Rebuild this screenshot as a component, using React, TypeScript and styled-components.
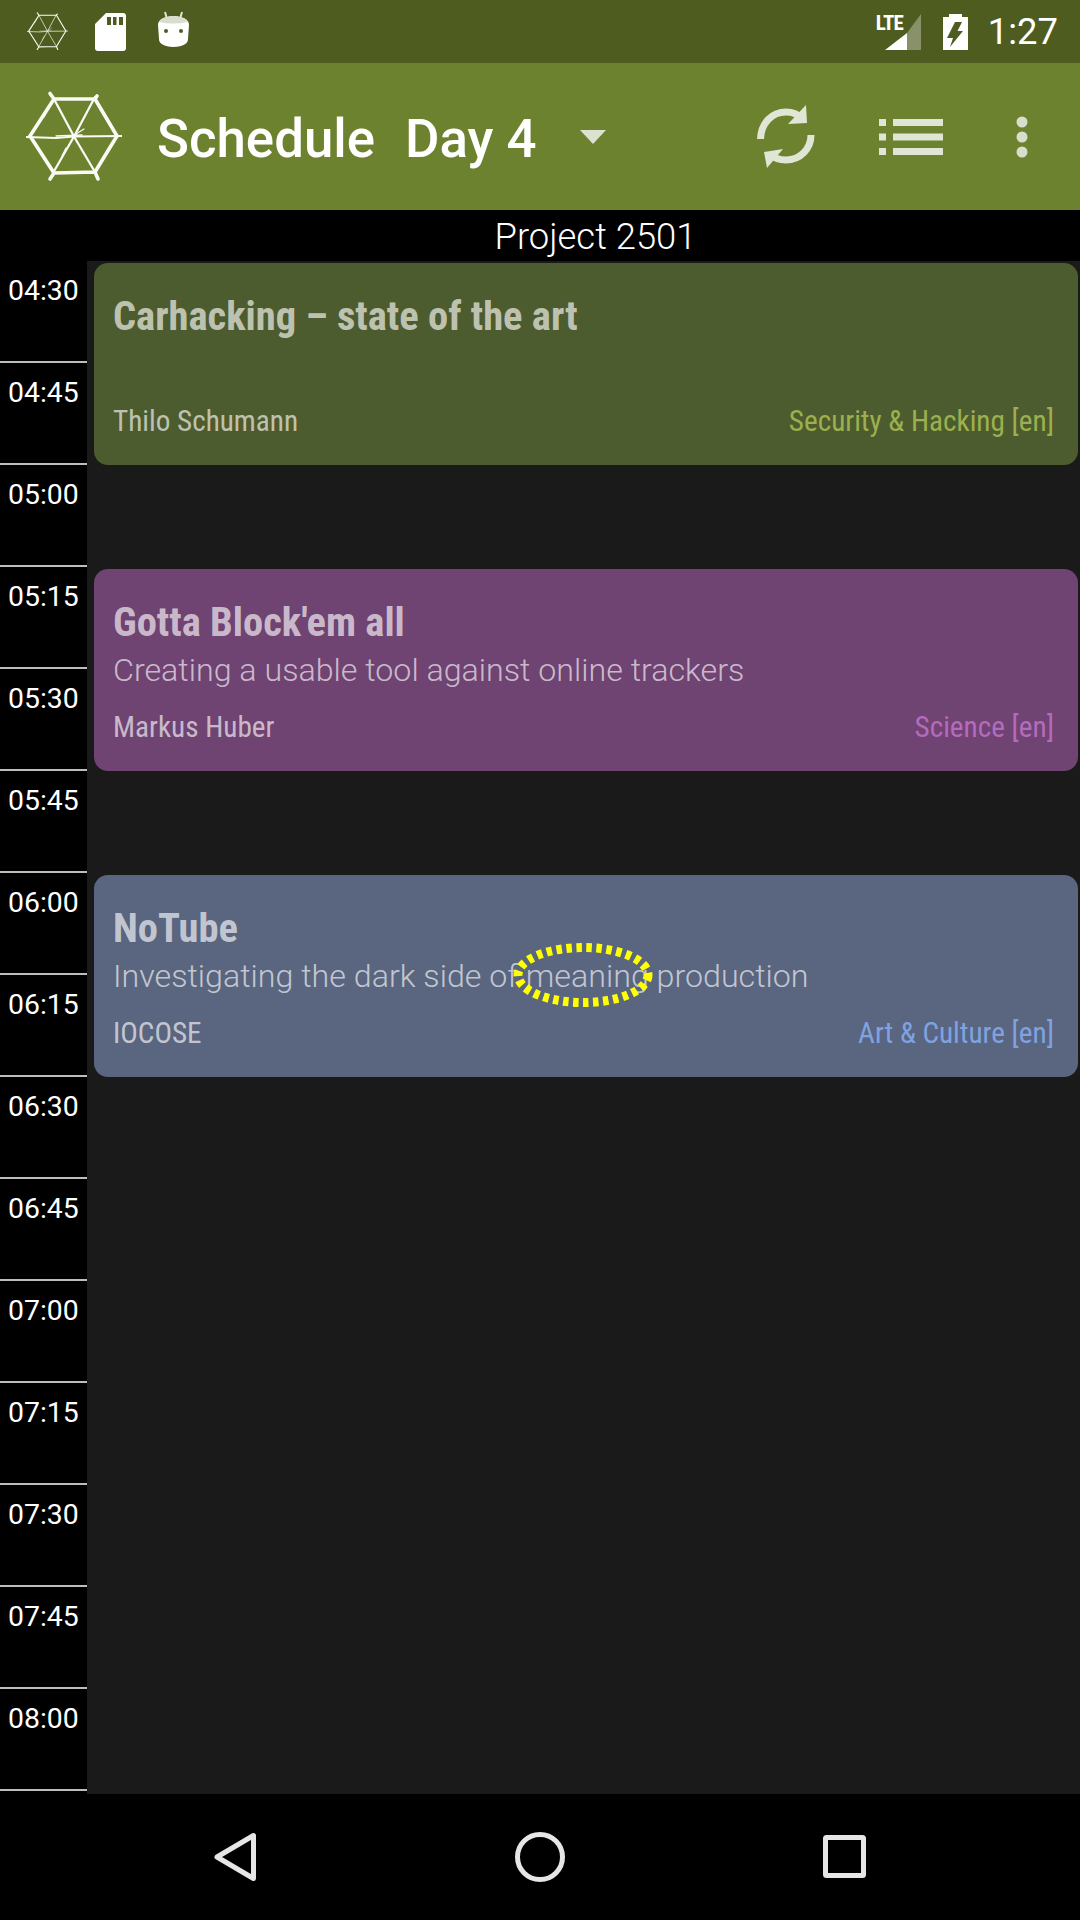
import React from 'react';
import styled, { createGlobalStyle } from 'styled-components';

const GlobalStyle = createGlobalStyle`
  html, body { margin: 0; padding: 0; background: #000; }
  #root { width: 1080px; height: 1920px; overflow: hidden; }
`;

/* ─── page frame ─── */
const Screen = styled.div`
  width: 1080px;
  height: 1920px;
  display: flex;
  flex-direction: column;
  background: #000;
  font-family: Roboto, sans-serif;
  color: #fff;
`;

/* ─── status bar ─── */
const StatusBar = styled.div`
  height: 63px;
  flex: none;
  background: #4f5c20;
  display: flex;
  align-items: center;
  padding: 0 22px 0 27px;
`;

const NoticeIcons = styled.div`
  display: flex;
  align-items: center;
  gap: 27px;
`;

const AndroidIcon = styled.svg`
  margin: -4px 0 0 5px;
`;

const SystemIcons = styled.div`
  margin-left: auto;
  display: flex;
  align-items: center;
`;

const SignalWrap = styled.div`
  position: relative;
  width: 36px;
  height: 36px;
`;

const Lte = styled.span`
  position: absolute;
  left: -9px;
  top: -2px;
  font-family: "Roboto Condensed", Roboto, sans-serif;
  font-size: 21px;
  line-height: 22px;
  font-weight: 700;
  letter-spacing: -0.8px;
`;

const BatteryIcon = styled.svg`
  margin-left: 22px;
`;

const Clock = styled.span`
  margin: 1px 0 0 20px;
  font-size: 36.4px;
  line-height: 42px;
`;

/* ─── action bar ─── */
const AppBar = styled.div`
  height: 147px;
  flex: none;
  background: #6d822e;
  display: flex;
  align-items: center;
  padding-left: 26px;
`;

const AppTitle = styled.span<{ $gap: number }>`
  margin: 4px 0 0 ${p => p.$gap}px;
  font-size: 52.8px;
  font-weight: 500;
  white-space: nowrap;
`;

const Caret = styled.svg`
  margin-left: 43px;
`;

const Actions = styled.div`
  margin-left: auto;
  display: flex;
  align-items: center;
  padding-right: 52px;
`;

const RefreshIcon = styled.svg`
  margin-right: 63px;
`;

const ListIcon = styled.svg`
  margin-right: 73px;
`;

/* ─── room title ─── */
const RoomTitle = styled.div`
  height: 50px;
  flex: none;
  padding: 1px 0 0 111px;
  text-align: center;
  font-size: 36.4px;
  font-weight: 300;
  line-height: 51px;
`;

/* ─── schedule body ─── */
const Body = styled.div`
  flex: 1;
  min-height: 0;
  display: flex;
`;

const TimeColumn = styled.div`
  width: 87px;
  flex: none;
  display: flex;
  flex-direction: column;
`;

const TimeCell = styled.div`
  height: 102px;
  box-sizing: border-box;
  flex: none;
  border-bottom: 2px solid #bdbdbd;
  padding: 13px 0 0 8px;
  font-size: 28.4px;
  line-height: 34px;
`;

const Grid = styled.div`
  flex: 1;
  background: #1a1a1a;
  display: flex;
  flex-direction: column;
  gap: 104px;
  padding: 2px 2px 0 7px;
`;

const Card = styled.div<{ $bg: string }>`
  position: relative;
  height: 202px;
  box-sizing: border-box;
  flex: none;
  background: ${p => p.$bg};
  border-radius: 14px;
  padding: 29px 24px 0 19px;
  display: flex;
  flex-direction: column;
  color: rgba(255, 255, 255, 0.65);
`;

const CardTitle = styled.div`
  font-family: "Roboto Condensed", Roboto, sans-serif;
  font-size: 40.5px;
  font-weight: 700;
  line-height: 48px;
  white-space: nowrap;
`;

const CardSubtitle = styled.div`
  font-size: 32.2px;
  font-weight: 300;
  line-height: 36px;
  margin-top: 6px;
  white-space: nowrap;
`;

const CardFooter = styled.div`
  margin-top: auto;
  padding-bottom: 27px;
  display: flex;
  justify-content: space-between;
  font-family: "Roboto Condensed", Roboto, sans-serif;
  font-size: 29.2px;
  line-height: 34px;
`;

const Track = styled.span<{ $color: string }>`
  color: ${p => p.$color};
`;

const TouchMark = styled.svg`
  position: absolute;
  left: 418.5px;
  top: 67px;
`;

/* ─── navigation bar ─── */
const NavBar = styled.div`
  height: 126px;
  flex: none;
  background: #000;
  display: flex;
  align-items: center;
  justify-content: space-between;
  padding: 0 213px 0 213px;
`;

const TIMES = [
  '04:30', '04:45', '05:00', '05:15', '05:30', '05:45', '06:00', '06:15',
  '06:30', '06:45', '07:00', '07:15', '07:30', '07:45', '08:00',
];

const EVENTS = [
  {
    title: 'Carhacking – state of the art',
    subtitle: '',
    speaker: 'Thilo Schumann',
    track: 'Security & Hacking [en]',
    bg: '#4d5c2e',
    trackColor: '#9db04f',
  },
  {
    title: "Gotta Block'em all",
    subtitle: 'Creating a usable tool against online trackers',
    speaker: 'Markus Huber',
    track: 'Science [en]',
    bg: '#6f4372',
    trackColor: '#b56bbd',
  },
  {
    title: 'NoTube',
    subtitle: 'Investigating the dark side of meaning production',
    speaker: 'IOCOSE',
    track: 'Art & Culture [en]',
    bg: '#5a6580',
    trackColor: '#7fa3e0',
    touch: true,
  },
];

// hand-sketched hexagon, overshooting at the corners
const HexLogo: React.FC<{ size: number; stroke: number }> = ({ size, stroke }) => (
  <svg width={size} height={size} viewBox="0 0 96 96" fill="none" stroke="#fafbf5" strokeWidth={stroke} strokeLinecap="round">
    <path d="M24 4.500 L28 10 L69 10 L71 7 M28 10 L4 47 L28 84 L24 90 M28 84 L69 83 L72 90 M69 83 L91 47 L69 10" />
    <path d="M0 48 L30 49 L48 47.500 L96 47 M28 10 L48 47.500 L69 83 M69 8 L48 47.500 L27 84" strokeWidth={stroke * 0.62} />
    <path d="M18 28 L24 17 M58 40 L50 45 M36 67 L40 59 M30 47 L56 46" strokeWidth={stroke * 0.35} />
  </svg>
);

export default function App() {
  return (
    <Screen>
      <GlobalStyle />
      <StatusBar>
        <NoticeIcons>
          <HexLogo size={41} stroke={2.6} />
          <svg width="31" height="38" viewBox="0 0 31 38" fill="#fff">
            <path fillRule="evenodd" d="M11 0 H28 a3 3 0 0 1 3 3 V35 a3 3 0 0 1 -3 3 H3 a3 3 0 0 1 -3 -3 V11 Z M12 4 V12 H16 V4 Z M18 4 V12 H21.500 V4 Z M24 4 V12 H28 V4 Z" />
          </svg>
          <AndroidIcon width="31" height="37" viewBox="0 0 31 37">
            <path d="M7 1 L9 8 M24 1 L22 8" stroke="#e0e4d8" strokeWidth="2" />
            <path d="M0 14 Q0 6 15.500 5 Q31 6 31 14 L30 28 Q30 35 15.500 36 Q1 35 1 28 Z" fill="#fff" />
            <path d="M1 11 Q3 6 15.500 5 Q28 6 30 11 Q15.500 14 1 11 Z" fill="#d9ddcb" />
            <circle cx="8" cy="20" r="2" fill="#4f5c20" />
            <circle cx="23" cy="20" r="2" fill="#4f5c20" />
          </AndroidIcon>
        </NoticeIcons>
        <SystemIcons>
          <SignalWrap>
            <Lte>LTE</Lte>
            <svg width="36" height="36" viewBox="0 0 36 36">
              <path d="M36 0 V36 H22 V19 Z" fill="#fff" fillOpacity="0.33" />
              <path d="M22 19 V36 H0 Z" fill="#fff" />
            </svg>
          </SignalWrap>
          <BatteryIcon width="25" height="36" viewBox="0 0 25 36">
            <path fillRule="evenodd" fill="#fff" d="M6 0 H19 V3 H25 V36 H0 V3 H6 Z M12 8 L4 24 H10 L7 33 L20 17 H14.500 L19 8 Z" />
          </BatteryIcon>
          <Clock>1:27</Clock>
        </SystemIcons>
      </StatusBar>

      <AppBar>
        <HexLogo size={96} stroke={3.6} />
        <AppTitle $gap={35}>Schedule</AppTitle>
        <AppTitle $gap={30}>Day 4</AppTitle>
        <Caret width="26" height="14" viewBox="0 0 26 14">
          <path d="M0 0 H26 L13 14 Z" fill="#dde2d0" />
        </Caret>
        <Actions>
          <RefreshIcon width="60" height="64" viewBox="0 0 60 64" fill="none">
            <path d="M4.500 34 C5 18 16 7 30 7 C37 7 43 10 47 14" stroke="#e0e5d6" strokeWidth="7" />
            <path d="M50 0 L51 18 L32 19 Z" fill="#e0e5d6" />
            <path d="M55 30 C55 44 44 55 30 55 C23 55 18 53 14 49" stroke="#e0e5d6" strokeWidth="7" />
            <path d="M8 47 L27 44 L11 63 Z" fill="#e0e5d6" />
          </RefreshIcon>
          <ListIcon width="64" height="36" viewBox="0 0 64 36" fill="#e0e5d6">
            <path d="M0 0 H7 V7 H0 Z M14 0 H64 V7 H14 Z M0 14.500 H7 V21.500 H0 Z M14 14.500 H64 V21.500 H14 Z M0 29 H7 V36 H0 Z M14 29 H64 V36 H14 Z" />
          </ListIcon>
          <svg width="12" height="42" viewBox="0 0 12 42" fill="#d8decb">
            <circle cx="6" cy="6" r="5.500" />
            <circle cx="6" cy="21" r="5.500" />
            <circle cx="6" cy="36" r="5.500" />
          </svg>
        </Actions>
      </AppBar>

      <RoomTitle>Project 2501</RoomTitle>

      <Body>
        <TimeColumn>
          {TIMES.map(t => <TimeCell key={t}>{t}</TimeCell>)}
        </TimeColumn>
        <Grid>
          {EVENTS.map(ev => (
            <Card key={ev.title} $bg={ev.bg}>
              <CardTitle>{ev.title}</CardTitle>
              {ev.subtitle && <CardSubtitle>{ev.subtitle}</CardSubtitle>}
              <CardFooter>
                <span>{ev.speaker}</span>
                <Track $color={ev.trackColor}>{ev.track}</Track>
              </CardFooter>
              {ev.touch && (
                <TouchMark width="140" height="66" viewBox="0 0 140 66" fill="none">
                  <ellipse cx="70" cy="33" rx="65" ry="27.500" stroke="#ffff00" strokeWidth="9" strokeDasharray="5.500 4.500" />
                </TouchMark>
              )}
            </Card>
          ))}
        </Grid>
      </Body>

      <NavBar>
        <svg width="44" height="50" viewBox="0 0 44 50" fill="none" stroke="#e6e6e6" strokeWidth="5" strokeLinejoin="round">
          <path d="M40.500 3.500 V46.500 L4 25 Z" />
        </svg>
        <svg width="50" height="50" viewBox="0 0 50 50" fill="none" stroke="#e6e6e6" strokeWidth="5">
          <circle cx="25" cy="25" r="22.500" />
        </svg>
        <svg width="44" height="44" viewBox="0 0 44 44" fill="none" stroke="#e6e6e6" strokeWidth="5" strokeLinejoin="round">
          <rect x="2.500" y="2.500" width="38" height="38" rx="1" />
        </svg>
      </NavBar>
    </Screen>
  );
}
